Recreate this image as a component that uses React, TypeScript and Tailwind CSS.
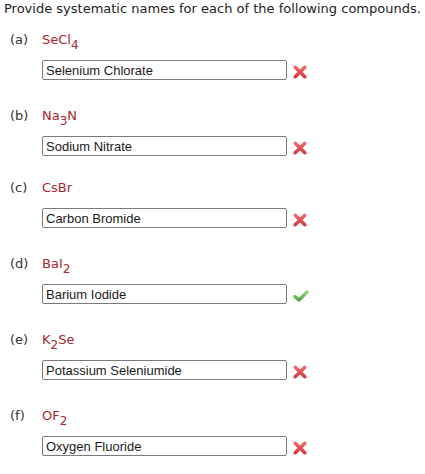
import React from 'react';

type Item = {
  letter: string;
  parts: { text: string; sub?: boolean }[];
  answer: string;
  correct: boolean;
  gap: string;
};

const items: Item[] = [
  { letter: 'a', parts: [{ text: 'SeCl' }, { text: '4', sub: true }], answer: 'Selenium Chlorate', correct: false, gap: 'mt-[15px]' },
  { letter: 'b', parts: [{ text: 'Na' }, { text: '3', sub: true }, { text: 'N' }], answer: 'Sodium Nitrate', correct: false, gap: 'mt-[28px]' },
  { letter: 'c', parts: [{ text: 'CsBr' }], answer: 'Carbon Bromide', correct: false, gap: 'mt-[24px]' },
  { letter: 'd', parts: [{ text: 'BaI' }, { text: '2', sub: true }], answer: 'Barium Iodide', correct: true, gap: 'mt-[28px]' },
  { letter: 'e', parts: [{ text: 'K' }, { text: '2', sub: true }, { text: 'Se' }], answer: 'Potassium Seleniumide', correct: false, gap: 'mt-[28px]' },
  { letter: 'f', parts: [{ text: 'OF' }, { text: '2', sub: true }], answer: 'Oxygen Fluoride', correct: false, gap: 'mt-[28px]' },
];

const WrongIcon = () => (
  <svg width="14" height="14" viewBox="0 0 14 14" className="shrink-0">
    <defs>
      <linearGradient id="xg" x1="0" y1="0" x2="0" y2="1">
        <stop offset="0" stopColor="#f0666b" />
        <stop offset="1" stopColor="#d8373d" />
      </linearGradient>
    </defs>
    <path d="M2.2 2.2 L11.8 11.8 M11.8 2.2 L2.2 11.8" stroke="url(#xg)" strokeWidth="3.4" strokeLinecap="round" />
  </svg>
);

const RightIcon = () => (
  <svg width="16" height="14" viewBox="0 0 16 14" className="shrink-0">
    <defs>
      <linearGradient id="cg" x1="0" y1="0" x2="0" y2="1">
        <stop offset="0" stopColor="#8fd17f" />
        <stop offset="1" stopColor="#4fa545" />
      </linearGradient>
    </defs>
    <path d="M2 7.5 L6 11 L14 3" fill="none" stroke="url(#cg)" strokeWidth="3.2" strokeLinecap="round" strokeLinejoin="round" />
  </svg>
);

export default function App() {
  return (
    <div className="w-[425px] h-[474px] bg-white pt-[1px] text-[#222]" style={{ fontFamily: '"DejaVu Sans", Verdana, sans-serif' }}>
      <p className="pl-[4px] text-[13px] leading-[16px] whitespace-nowrap">
        Provide systematic names for each of the following compounds.
      </p>
      {items.map((it) => (
        <div key={it.letter} className={it.gap}>
          <div className="flex pl-[10px] text-[13px] leading-[16px]">
            <span className="w-[32px] text-[#333]">({it.letter})</span>
            <span className="text-[#a8262d]">
              {it.parts.map((p, i) =>
                p.sub ? (
                  <span key={i} className="relative top-[5px] text-[12px]">{p.text}</span>
                ) : (
                  <span key={i}>{p.text}</span>
                )
              )}
            </span>
          </div>
          <div className="mt-[12px] flex items-center pl-[42px]">
            <input
              readOnly
              value={it.answer}
              className="w-[245px] h-[20px] border border-[#7a7a7a] rounded-[2px] px-[3px] text-[13px] text-[#1a1a1a] outline-none"
              style={{ fontFamily: '"Liberation Sans", Arial, sans-serif' }}
            />
            <span className="ml-[6px] mt-[4px] flex">
              {it.correct ? <RightIcon /> : <WrongIcon />}
            </span>
          </div>
        </div>
      ))}
    </div>
  );
}
